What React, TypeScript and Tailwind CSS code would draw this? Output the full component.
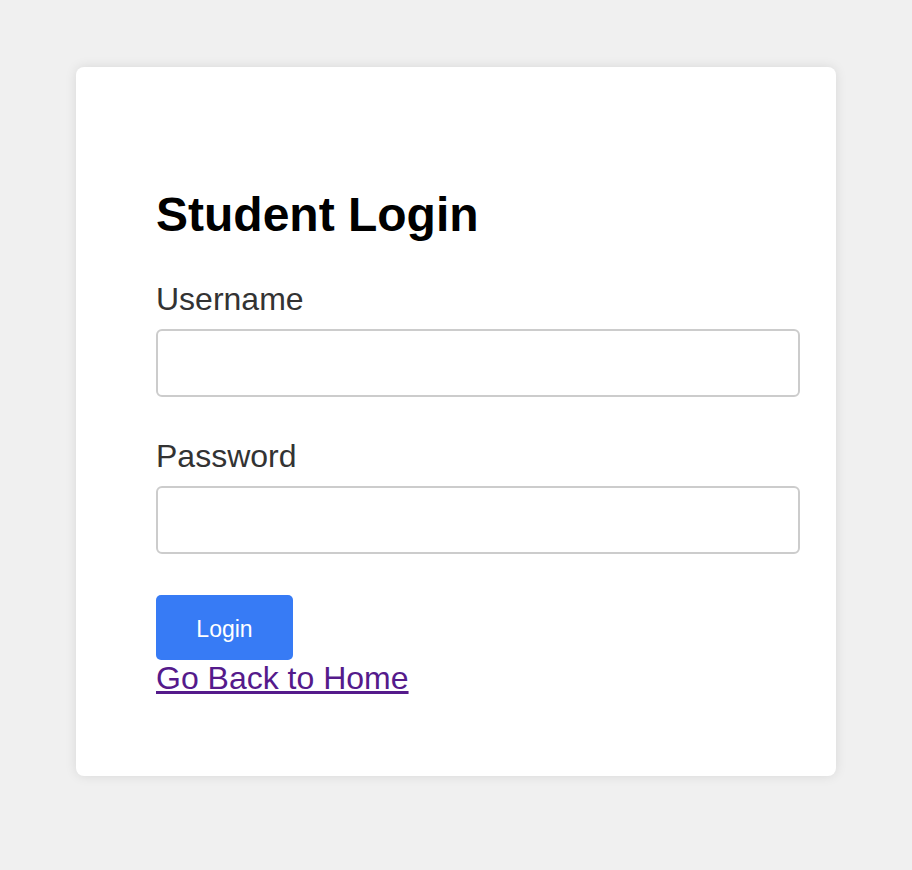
import React from "react";

export default function App() {
  return (
    <div
      className="min-h-screen bg-[#f0f0f0] pt-[67px]"
      style={{ fontFamily: '"Liberation Sans", Arial, sans-serif' }}
    >
      <div className="mx-auto w-[760px] bg-white rounded-[8px] shadow-[0_0_12px_rgba(0,0,0,0.1)] pl-[80px] pr-[36px] pt-[120px] pb-[81px]">
        <h1 className="text-[48px] leading-[56px] font-bold text-black">Student Login</h1>
        <form onSubmit={(e) => e.preventDefault()}>
          <label htmlFor="username" className="block mt-[38px] text-[32px] leading-[37px] text-[#333]">
            Username
          </label>
          <input
            id="username"
            type="text"
            className="block mt-[11px] w-[644px] h-[68px] border-2 border-[#cccccc] rounded-[6px] bg-white px-[10px] text-[24px] outline-none"
          />
          <label htmlFor="password" className="block mt-[41px] text-[32px] leading-[37px] text-[#333]">
            Password
          </label>
          <input
            id="password"
            type="password"
            className="block mt-[11px] w-[644px] h-[68px] border-2 border-[#cccccc] rounded-[6px] bg-white px-[10px] text-[24px] outline-none"
          />
          <button
            type="submit"
            className="block mt-[41px] w-[137px] h-[65px] bg-[#377bf5] text-white rounded-[5px] text-[23px] leading-none pt-[3px]"
          >
            Login
          </button>
        </form>
        <a href="#" className="block w-max mt-[2px] text-[32px] leading-[33px] text-[#551a8b] underline">
          Go Back to Home
        </a>
      </div>
    </div>
  );
}
